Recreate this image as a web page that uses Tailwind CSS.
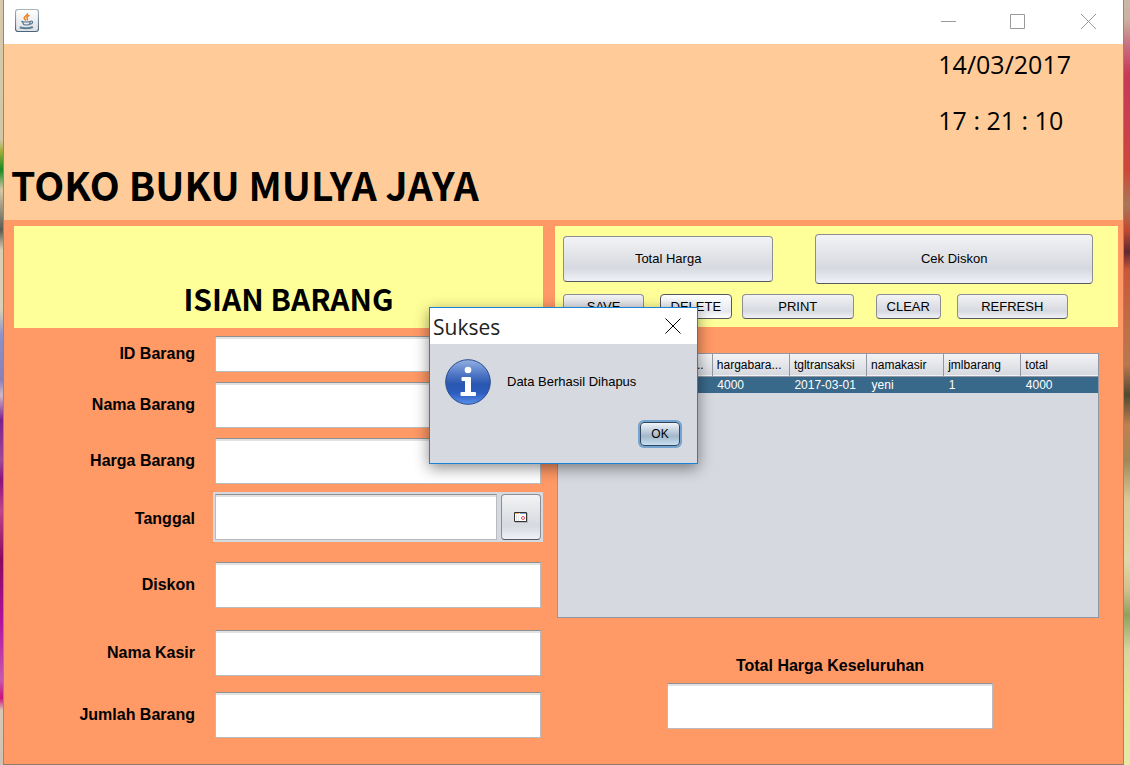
<!DOCTYPE html>
<html lang="id">
<head>
<meta charset="utf-8">
<meta name="viewport" content="width=device-width, initial-scale=1">
<title>Toko Buku Mulya Jaya</title>
<script src="https://cdn.jsdelivr.net/npm/@tailwindcss/browser@4"></script>
</head>
<body class="relative flex min-h-screen overflow-x-hidden bg-[#d9c9a8] font-['Liberation_Sans',Arial,sans-serif] text-black">

<!-- desktop wallpaper, left edge -->
<div class="w-1 shrink-0 border-r border-[#8f8a80] bg-[linear-gradient(to_bottom,#d9c9ac_0px,#d2c6a8_140px,#a8b040_150px,#178a20_170px,#d8c8a8_190px,#5a5a50_230px,#d8d0b4_250px,#d8cfb8_310px,#8d93c8_335px,#8a80b8_380px,#d0b8c8_395px,#7a1f90_420px,#a04a98_460px,#8c1080_480px,#c04488_510px,#8a0860_560px,#b010a0_620px,#c858b0_680px,#c8107a_698px,#d8c8b4_710px,#cfc0b4_765px)]"></div>

<main class="flex min-w-0 flex-1 flex-col bg-[#ff9966]">
  <header class="flex h-11 shrink-0 items-center justify-between bg-white pb-[2px] pl-[11px] pr-[27px]">
    <svg class="h-6 w-6" viewBox="0 0 24 24" aria-label="Java" role="img">
      <defs><linearGradient id="jv" x1="0" y1="0" x2="0" y2="1"><stop offset="0" stop-color="#ffffff"/><stop offset="1" stop-color="#dfe0e2"/></linearGradient>
      <linearGradient id="jb" x1="0" y1="0" x2="0" y2="1"><stop offset="0" stop-color="#a9b4bf"/><stop offset="1" stop-color="#49647c"/></linearGradient></defs>
      <rect x=".5" y=".5" width="23" height="22" rx="2.5" fill="url(#jv)" stroke="url(#jb)" stroke-width="1.2"/>
      <path d="M12.500 4.200c.6 2.200-3.300 2.800-3.300 4.800 0 1.300 1.300 1.700 1.800 2.500M14.500 6.200c-2.300 1-3 1.900-2.300 3 .5.800.4 1.400-.2 2.200" fill="none" stroke="#ef8227" stroke-width="1.500"/>
      <path d="M6.200 12.400q4.500 1.200 9.500 0M7.500 13l1.200 2.600q2.800.8 5.500 0L15.500 13M15.500 12.300c2.800-1 3 2.400-.8 3M5 17.800c3 1.400 9.500 1.300 12.500-.4M4.500 19c4 .8 10 .8 13.500-.6" fill="none" stroke="#5b7d96" stroke-width="1.200"/>
    </svg>
    <div class="flex items-center gap-[54px]">
      <button type="button" aria-label="Minimize"><svg class="h-4 w-4" viewBox="0 0 16 16"><path d="M1 8.500h15" stroke="#999" fill="none"/></svg></button>
      <button type="button" aria-label="Maximize"><svg class="h-4 w-4" viewBox="0 0 16 16"><path d="M.5 1.500h14v14h-14z" stroke="#999" fill="none"/></svg></button>
      <button type="button" aria-label="Close"><svg class="h-4 w-4" viewBox="0 0 16 16"><path d="M1 1l15 15M16 1L1 16" stroke="#999" fill="none"/></svg></button>
    </div>
  </header>

  <section class="flex h-44 shrink-0 items-end justify-between bg-[#ffcc99] pl-[7px] pr-[52px]">
    <h1 class="whitespace-nowrap pb-[6px] font-['Noto_Sans_CJK_SC',sans-serif] text-[39px] font-bold leading-[60px]">TOKO BUKU MULYA JAYA</h1>
    <div class="flex flex-col gap-5 self-start pt-[2px] font-['Open_Sans','Noto_Sans',sans-serif] text-[25px] leading-9">
      <time>14/03/2017</time>
      <time>17 : 21 : 10</time>
    </div>
  </section>

  <div class="flex flex-1 gap-3 pl-[10px] pr-[5px] pt-[6px]">
    <form class="flex min-w-0 flex-[529] flex-col">
      <div class="flex h-[102px] items-end justify-center bg-[#ffff99] pb-[6px]">
        <h2 class="whitespace-nowrap pl-5 font-['Noto_Sans_CJK_SC',sans-serif] text-[30px] font-bold leading-[48px]">ISIAN BARANG</h2>
      </div>
      <div class="grid grid-cols-[181px_1fr] items-center gap-x-5 pr-[2px] pt-2 text-right text-base font-bold">
        <label for="id" class="pb-[10px]">ID Barang</label>
        <input id="id" class="mb-[10px] h-9 w-full border border-[#b8bcbf] border-t-[#8e8f8f] bg-white px-2 font-normal shadow-[inset_0_2px_0_#e2e2e2]">
        <label for="nama" class="pb-[10px]">Nama Barang</label>
        <input id="nama" class="mb-[10px] h-[46px] w-full border border-[#b8bcbf] border-t-[#8e8f8f] bg-white px-2 font-normal shadow-[inset_0_2px_0_#e2e2e2]">
        <label for="harga" class="pb-2">Harga Barang</label>
        <input id="harga" class="mb-2 h-[46px] w-full border border-[#b8bcbf] border-t-[#8e8f8f] bg-white px-2 font-normal shadow-[inset_0_2px_0_#e2e2e2]">
        <label for="tgl" class="pb-4">Tanggal</label>
        <div class="-mx-[2px] mb-5 flex gap-1 bg-[#d6d9df] p-[2px]">
          <input id="tgl" class="h-[46px] min-w-0 flex-1 border border-[#b8bcbf] border-t-[#8e8f8f] bg-white px-2 font-normal shadow-[inset_0_2px_0_#e2e2e2]">
          <button type="button" aria-label="Pilih tanggal" class="flex h-[46px] w-10 items-center justify-center rounded border border-[#8c8e93] border-b-[#55585f] bg-linear-to-b from-[#f3f3f5] via-[#d6d9df] via-70% to-[#f0f2f8]">
            <svg class="h-[11px] w-[14px]" viewBox="0 0 14 11"><path d="M1 1h13v10H1z" fill="#b5b7bb"/><path d="M.5.5h12v9H.5z" fill="#fff" stroke="#333"/><path d="M1 1.500h4" stroke="#f0ad4a"/><path d="M6 1.500h6" stroke="#86a6d8"/><path d="M2.500 3v6M4.500 3v6" stroke="#e4e4e4"/><circle cx="9" cy="6" r="1.500" fill="none" stroke="#e05050"/></svg>
          </button>
        </div>
        <label for="diskon" class="pb-[22px]">Diskon</label>
        <input id="diskon" class="mb-[22px] h-[46px] w-full border border-[#b8bcbf] border-t-[#8e8f8f] bg-white px-2 font-normal shadow-[inset_0_2px_0_#e2e2e2]">
        <label for="kasir" class="pb-4">Nama Kasir</label>
        <input id="kasir" class="mb-4 h-[46px] w-full border border-[#b8bcbf] border-t-[#8e8f8f] bg-white px-2 font-normal shadow-[inset_0_2px_0_#e2e2e2]">
        <label for="jumlah">Jumlah Barang</label>
        <input id="jumlah" class="h-[46px] w-full border border-[#b8bcbf] border-t-[#8e8f8f] bg-white px-2 font-normal shadow-[inset_0_2px_0_#e2e2e2]">
      </div>
    </form>

    <section class="flex min-w-0 flex-[563] flex-col">
      <div class="flex h-[101px] flex-col gap-[10px] bg-[#ffff99] pl-2 pr-[25px] pt-2 text-[13px]">
        <div class="flex items-center justify-between gap-[42px]">
          <button type="button" class="h-[46px] flex-[210] rounded border border-[#8c8e93] border-b-[#55585f] bg-linear-to-b from-[#f3f3f5] via-[#d6d9df] via-70% to-[#f0f2f8]">Total Harga</button>
          <button type="button" class="h-[50px] flex-[278] rounded border border-[#8c8e93] border-b-[#55585f] bg-linear-to-b from-[#f3f3f5] via-[#d6d9df] via-70% to-[#f0f2f8]">Cek Diskon</button>
        </div>
        <div class="flex items-start pr-[25px]">
          <button type="button" class="mr-4 h-[25px] flex-[81] rounded border border-[#8c8e93] border-b-[#55585f] bg-linear-to-b from-[#f3f3f5] via-[#d6d9df] via-70% to-[#f0f2f8]">SAVE</button>
          <button type="button" class="mr-[10px] h-[25px] flex-[71] rounded border border-[#55585f] bg-linear-to-b from-white via-[#e6e8ee] via-70% to-white">DELETE</button>
          <button type="button" class="mr-[22px] h-[25px] flex-[113] rounded border border-[#8c8e93] border-b-[#55585f] bg-linear-to-b from-[#f3f3f5] via-[#d6d9df] via-70% to-[#f0f2f8]">PRINT</button>
          <button type="button" class="mr-4 h-[25px] flex-[64] rounded border border-[#8c8e93] border-b-[#55585f] bg-linear-to-b from-[#f3f3f5] via-[#d6d9df] via-70% to-[#f0f2f8]">CLEAR</button>
          <button type="button" class="h-[25px] flex-[112] rounded border border-[#8c8e93] border-b-[#55585f] bg-linear-to-b from-[#f3f3f5] via-[#d6d9df] via-70% to-[#f0f2f8]">REFRESH</button>
        </div>
      </div>

      <div class="ml-[2px] mr-[19px] mt-[26px] h-[265px] border border-[#9297a1] bg-[#d6d9df]">
        <table class="w-full table-fixed border-collapse text-left text-xs">
          <thead>
            <tr class="h-[22px] border-b border-[#9297a1] bg-linear-to-b from-[#f3f3f5] to-[#d6d9df]">
              <th class="whitespace-nowrap border-r border-[#9297a1] pl-1 font-normal">idbarang</th>
              <th class="whitespace-nowrap border-r border-[#9297a1] pl-1 font-normal">namabara...</th>
              <th class="whitespace-nowrap border-r border-[#9297a1] pl-1 font-normal">hargabara...</th>
              <th class="whitespace-nowrap border-r border-[#9297a1] pl-1 font-normal">tgltransaksi</th>
              <th class="whitespace-nowrap border-r border-[#9297a1] pl-1 font-normal">namakasir</th>
              <th class="whitespace-nowrap border-r border-[#9297a1] pl-1 font-normal">jmlbarang</th>
              <th class="whitespace-nowrap pl-1 font-normal">total</th>
            </tr>
          </thead>
          <tbody>
            <tr class="h-4 bg-[#39698a] leading-4 text-white">
              <td></td><td></td><td class="pl-[5px]">4000</td><td class="pl-[5px]">2017-03-01</td><td class="pl-[5px]">yeni</td><td class="pl-[5px]">1</td><td class="pl-[5px]">4000</td>
            </tr>
          </tbody>
        </table>
      </div>

      <div class="flex flex-col items-center pr-[13px] pt-9">
        <label for="total" class="pb-[5px] text-base font-bold">Total Harga Keseluruhan</label>
        <input id="total" class="h-[46px] w-[326px] border border-[#b8bcbf] border-t-[#8e8f8f] bg-white px-2 shadow-[inset_0_2px_0_#e2e2e2]">
      </div>
    </section>
  </div>
  <div class="h-px bg-[#8d7a6c]"></div>
</main>

<!-- desktop wallpaper, right edge -->
<div class="w-[7px] shrink-0 border-l border-[#9b8478] bg-[linear-gradient(to_bottom,#c8b8a8_0px,#cbb0a0_20px,#c87080_45px,#c83858_75px,#c84050_120px,#cc4838_170px,#a87858_205px,#c04a30_230px,#602830_252px,#c85838_270px,#c07048_330px,#b87850_365px,#504830_395px,#c08050_425px,#a08858_460px,#d8c898_500px,#e0d8a8_560px,#d0c090_590px,#90a060_615px,#d8d4a0_650px,#e4e49a_700px,#e6e8a8_765px)]"></div>

<!-- message dialog -->
<div role="dialog" aria-labelledby="dlg" class="absolute left-[429px] top-[307px] flex w-[269px] flex-col border border-[#1883d7] bg-[#d6d9df] shadow-[0_4px_14px_rgba(0,0,0,0.45)]">
  <div class="flex h-9 items-center justify-between bg-white pl-[3px] pr-4">
    <h3 id="dlg" class="pt-[3px] font-['Open_Sans','Noto_Sans',sans-serif] text-[21px] text-[#222]">Sukses</h3>
    <button type="button" aria-label="Tutup"><svg class="h-4 w-4" viewBox="0 0 16 16"><path d="M.5.5l15 15M15.500.5l-15 15" stroke="#000" fill="none"/></svg></button>
  </div>
  <div class="flex items-center gap-4 pl-[15px] pt-[15px]">
    <svg class="h-[46px] w-[46px]" viewBox="0 0 46 46" role="img" aria-label="Informasi">
      <defs><linearGradient id="in" x1="0" y1="0" x2="0" y2="1"><stop offset="0" stop-color="#94b0e2"/><stop offset=".35" stop-color="#4b73c4"/><stop offset=".55" stop-color="#2a57b0"/><stop offset=".75" stop-color="#2c5cc0"/><stop offset="1" stop-color="#5a90ea"/></linearGradient></defs>
      <circle cx="23" cy="23" r="22.300" fill="url(#in)" stroke="#2a4a90"/>
      <circle cx="23" cy="11" r="3.300" fill="#fff"/>
      <path d="M17.500 18H25a1 1 0 0 1 1 1v14h4q1 0 1 1v2q0 1-1 1H16.500q-1 0-1-1v-2q0-1 1-1H20V22h-2.500q-1 0-1-1v-2q0-1 1-1z" fill="#fff"/>
    </svg>
    <p class="text-[13px]">Data Berhasil Dihapus</p>
  </div>
  <div class="flex justify-end pb-[17px] pr-[17px] pt-[17px]">
    <button type="button" class="h-6 w-10 rounded border border-[#30475c] bg-linear-to-b from-[#f0f4f8] via-[#a3b8cb] via-60% to-[#c8dff2] text-xs shadow-[0_0_0_2px_#73a4d1]">OK</button>
  </div>
</div>
</body>
</html>
